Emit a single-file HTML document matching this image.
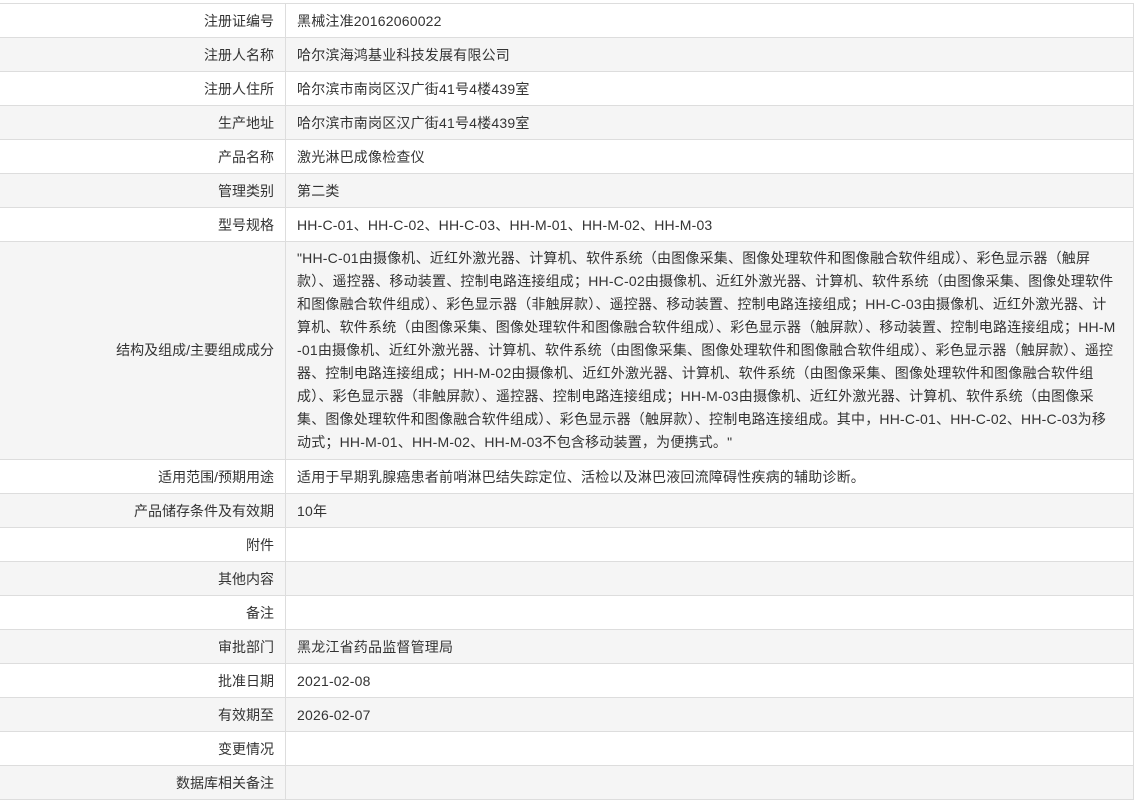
<!DOCTYPE html>
<html><head><meta charset="utf-8"><style>
body{margin:0;background:#fff;font-family:"Liberation Sans","Noto Sans CJK SC",sans-serif;font-size:14px;color:#333;}
table{position:absolute;left:-1px;top:3px;width:1135px;border-collapse:collapse;}
td{border:1px solid #ddd;height:34px;padding:0 11px;box-sizing:border-box;vertical-align:middle;white-space:nowrap;letter-spacing:0.2px;}
td.l{width:286px;text-align:right;letter-spacing:0;}
tr:nth-child(even) td{background:#f5f5f5;}
.long td{height:218px;line-height:23px;}
</style></head><body>
<table>
<tr><td class="l">注册证编号</td><td>黑械注准20162060022</td></tr>
<tr><td class="l">注册人名称</td><td>哈尔滨海鸿基业科技发展有限公司</td></tr>
<tr><td class="l">注册人住所</td><td>哈尔滨市南岗区汉广街41号4楼439室</td></tr>
<tr><td class="l">生产地址</td><td>哈尔滨市南岗区汉广街41号4楼439室</td></tr>
<tr><td class="l">产品名称</td><td>激光淋巴成像检查仪</td></tr>
<tr><td class="l">管理类别</td><td>第二类</td></tr>
<tr><td class="l">型号规格</td><td>HH-C-01、HH-C-02、HH-C-03、HH-M-01、HH-M-02、HH-M-03</td></tr>
<tr class="long"><td class="l">结构及组成/主要组成成分</td><td>"HH-C-01由摄像机、近红外激光器、计算机、软件系统（由图像采集、图像处理软件和图像融合软件组成）、彩色显示器（触屏<br>款）、遥控器、移动装置、控制电路连接组成；HH-C-02由摄像机、近红外激光器、计算机、软件系统（由图像采集、图像处理软件<br>和图像融合软件组成）、彩色显示器（非触屏款）、遥控器、移动装置、控制电路连接组成；HH-C-03由摄像机、近红外激光器、计<br>算机、软件系统（由图像采集、图像处理软件和图像融合软件组成）、彩色显示器（触屏款）、移动装置、控制电路连接组成；HH-M<br>-01由摄像机、近红外激光器、计算机、软件系统（由图像采集、图像处理软件和图像融合软件组成）、彩色显示器（触屏款）、遥控<br>器、控制电路连接组成；HH-M-02由摄像机、近红外激光器、计算机、软件系统（由图像采集、图像处理软件和图像融合软件组<br>成）、彩色显示器（非触屏款）、遥控器、控制电路连接组成；HH-M-03由摄像机、近红外激光器、计算机、软件系统（由图像采<br>集、图像处理软件和图像融合软件组成）、彩色显示器（触屏款）、控制电路连接组成。其中，HH-C-01、HH-C-02、HH-C-03为移<br>动式；HH-M-01、HH-M-02、HH-M-03不包含移动装置，为便携式。"</td></tr>
<tr><td class="l">适用范围/预期用途</td><td>适用于早期乳腺癌患者前哨淋巴结失踪定位、活检以及淋巴液回流障碍性疾病的辅助诊断。</td></tr>
<tr><td class="l">产品储存条件及有效期</td><td>10年</td></tr>
<tr><td class="l">附件</td><td></td></tr>
<tr><td class="l">其他内容</td><td></td></tr>
<tr><td class="l">备注</td><td></td></tr>
<tr><td class="l">审批部门</td><td>黑龙江省药品监督管理局</td></tr>
<tr><td class="l">批准日期</td><td>2021-02-08</td></tr>
<tr><td class="l">有效期至</td><td>2026-02-07</td></tr>
<tr><td class="l">变更情况</td><td></td></tr>
<tr><td class="l">数据库相关备注</td><td></td></tr>
</table>
</body></html>
